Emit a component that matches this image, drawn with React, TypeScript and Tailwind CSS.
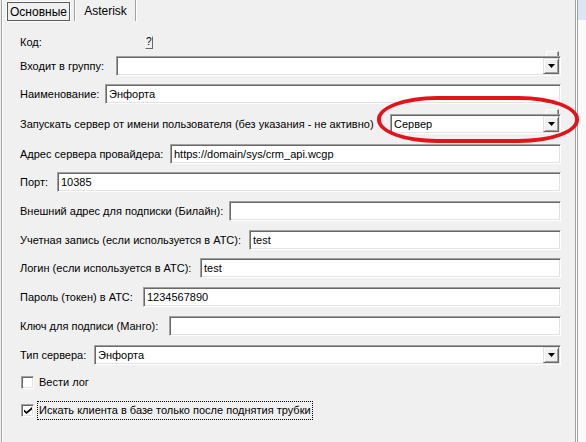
import React from "react";

const sunken =
  "bg-white border border-t-[#a0a0a0] border-l-[#a0a0a0] border-b-white border-r-white shadow-[inset_1px_1px_0_#696969,inset_-1px_-1px_0_#e3e3e3]";

function Field({ x, value }: { x: number; value?: string }) {
  return (
    <div className={`h-[20px] ${sunken} flex items-center pl-[3px]`} style={{ marginLeft: x - 20, width: 561 - x }}>
      {value}
    </div>
  );
}

function DropBtn() {
  return (
    <div className="w-[16px] h-[16px] bg-[#f0f0f0] border border-t-[#e3e3e3] border-l-[#e3e3e3] border-b-[#696969] border-r-[#696969] shadow-[inset_1px_1px_0_#fff,inset_-1px_-1px_0_#a0a0a0] flex items-center justify-center">
      <svg width="7" height="4" viewBox="0 0 7 4">
        <path d="M0 0h7L3.5 4z" fill="#000" />
      </svg>
    </div>
  );
}

function Combo({ value, nub, width }: { value?: string; nub?: boolean; width: number }) {
  return (
    <div className={`relative h-[20px] ${sunken} flex items-center justify-between pl-[3px] pr-[1px]`} style={{ width }}>
      {nub && (
        <div className="absolute -top-[6px] right-[1px] w-[13px] h-[5px] bg-[#f0f0f0] border-t border-l border-t-white border-l-white border-r border-r-[#696969] shadow-[inset_-1px_0_0_#a0a0a0]" />
      )}
      <span>{value}</span>
      <DropBtn />
    </div>
  );
}

function Row({ label, children, mt }: { label: string; children?: React.ReactNode; mt: string }) {
  return (
    <div className={`flex items-center h-[20px] ${mt}`}>
      <span className="whitespace-nowrap shrink-0 w-0 overflow-visible">{label}</span>
      {children}
    </div>
  );
}

function Check({ checked }: { checked?: boolean }) {
  return (
    <div className={`w-[13px] h-[13px] ${sunken} flex items-center justify-center`}>
      {checked && (
        <svg width="8" height="7" viewBox="0 0 8 7">
          <path d="M0 2.5l2.5 2.3L8 0v2.6L2.5 7 0 4.8z" fill="#000" />
        </svg>
      )}
    </div>
  );
}

export default function App() {
  return (
    <div className="w-[586px] h-[442px] bg-[#f0f0f0] flex text-[11px] leading-none text-black font-['Liberation_Sans',sans-serif] relative overflow-hidden">
      {/* левая рамка */}
      <div className="w-[3px] h-full border-l border-[#f0f0f0] shadow-[inset_1px_0_0_#a0a0a0,inset_-1px_0_0_#fff]" />

      <div className="flex-1 flex flex-col">
        {/* вкладки */}
        <div className="h-[21px] flex items-end shrink-0 text-[12px]">
          <div className="ml-[4px] w-[63px] h-[19px] border border-[#5a5a5a] shadow-[0_0_0_1px_#fff] flex items-center justify-center">
            Основные
          </div>
          <div className="ml-[4px] h-[21px] w-[2px] border-l border-[#a0a0a0] bg-white" />
          <div className="w-[59px] h-[21px] flex items-center justify-center">Asterisk</div>
          <div className="h-[21px] w-[2px] border-l border-[#a0a0a0] bg-white" />
        </div>

        {/* поля */}
        <div className="flex flex-col pl-[17px]">
          <div className="flex items-center h-[20px] mt-[11px]">
            <span>Код:</span>
            <div className="ml-[103px] w-[8px] h-[13px] bg-[#f0f0f0] border border-t-white border-l-white border-b-[#696969] border-r-[#696969] text-[10px] flex items-center justify-center">
              ?
            </div>
          </div>

          <Row label="Входит в группу:" mt="mt-[4px]">
            <div className="ml-[96px]">
              <Combo nub width={445} />
            </div>
          </Row>

          <Row label="Наименование:" mt="mt-[8px]">
            <Field x={105} value="Энфорта" />
          </Row>

          <Row label="Запускать сервер от имени пользователя (без указания - не активно)" mt="mt-[10px]">
            <div className="ml-[370px]">
              <Combo nub value="Сервер" width={171} />
            </div>
          </Row>

          <Row label="Адрес сервера провайдера:" mt="mt-[10px]">
            <Field x={170} value="https://domain/sys/crm_api.wcgp" />
          </Row>
          <Row label="Порт:" mt="mt-[8px]">
            <Field x={57} value="10385" />
          </Row>
          <Row label="Внешний адрес для подписки (Билайн):" mt="mt-[9px]">
            <Field x={229} />
          </Row>
          <Row label="Учетная запись (если используется в АТС):" mt="mt-[9px]">
            <Field x={249} value="test" />
          </Row>
          <Row label="Логин (если используется в АТС):" mt="mt-[8px]">
            <Field x={200} value="test" />
          </Row>
          <Row label="Пароль (токен) в АТС:" mt="mt-[9px]">
            <Field x={143} value="1234567890" />
          </Row>
          <Row label="Ключ для подписи (Манго):" mt="mt-[9px]">
            <Field x={169} />
          </Row>
          <Row label="Тип сервера:" mt="mt-[9px]">
            <div className="ml-[74px]">
              <Combo value="Энфорта" width={467} />
            </div>
          </Row>

          <div className="flex items-center h-[20px] mt-[7px] pl-[1px] gap-[5px]">
            <Check />
            <span>Вести лог</span>
          </div>
          <div className="flex items-center h-[20px] mt-[8px] pl-[1px] gap-[3px]">
            <Check checked />
            <span className="border border-dotted border-black px-[1px] py-[3px]">
              Искать клиента в базе только после поднятия трубки
            </span>
          </div>
        </div>
      </div>

      {/* правая рамка */}
      <div className="w-[12px] h-full flex">
        <div className="w-[1px] bg-[#a0a0a0] ml-[1px]" />
        <div className="w-[1px] bg-white" />
        <div className="w-[1px] bg-[#a0a0a0]" />
        <div className="flex-1 flex flex-col">
          <div className="h-[20px] bg-[#dbe6f4]" />
          <div className="flex-1 bg-[#fafafa]" />
        </div>
      </div>

      {/* пометка */}
      <div className="absolute left-[377px] top-[96px] w-[202px] h-[47px] border-[4px] border-[#e3131b] rounded-[60px/23px]" />
    </div>
  );
}
